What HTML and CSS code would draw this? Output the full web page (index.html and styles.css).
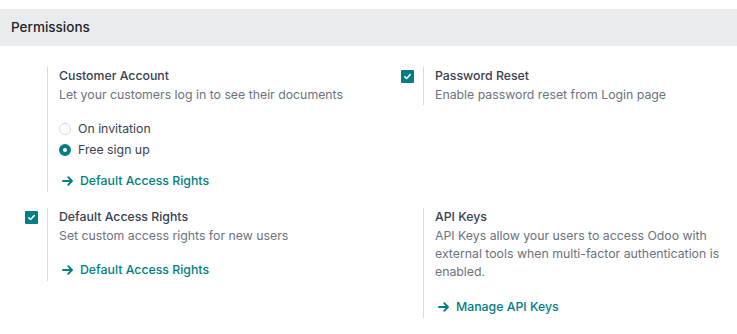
FILE: index.html
```html
<!DOCTYPE html>
<html>
<head>
<meta charset="utf-8">
<link rel="stylesheet" href="styles.css">
</head>
<body>
<div class="page">
  <div class="section-header">Permissions</div>
  <div class="settings">
    <div class="setting">
      <div class="setting-left"></div>
      <div class="setting-right">
        <div class="title">Customer Account</div>
        <div class="desc">Let your customers log in to see their documents</div>
        <div class="radios">
          <label class="radio-row"><span class="radio"></span>On invitation</label>
          <label class="radio-row"><span class="radio checked"></span>Free sign up</label>
        </div>
        <a class="link link-after-radios"><svg class="arrow" viewBox="0 0 12 10" width="12" height="10"><path d="M1 5H10M6.2 1.2L10 5L6.2 8.8" fill="none" stroke="currentColor" stroke-width="1.9" stroke-linecap="round" stroke-linejoin="round"/></svg>Default Access Rights</a>
      </div>
    </div>
    <div class="setting">
      <div class="setting-left"><span class="checkbox"><svg viewBox="0 0 13 13" width="13" height="13"><path d="M3.8 6.8L5.6 8.5L9.2 4.6" fill="none" stroke="#fff" stroke-width="1.6" stroke-linecap="round" stroke-linejoin="round"/></svg></span></div>
      <div class="setting-right">
        <div class="title">Password Reset</div>
        <div class="desc">Enable password reset from Login page</div>
      </div>
    </div>
    <div class="setting">
      <div class="setting-left"><span class="checkbox"><svg viewBox="0 0 13 13" width="13" height="13"><path d="M3.8 6.8L5.6 8.5L9.2 4.6" fill="none" stroke="#fff" stroke-width="1.6" stroke-linecap="round" stroke-linejoin="round"/></svg></span></div>
      <div class="setting-right">
        <div class="title">Default Access Rights</div>
        <div class="desc">Set custom access rights for new users</div>
        <a class="link link-short"><svg class="arrow" viewBox="0 0 12 10" width="12" height="10"><path d="M1 5H10M6.2 1.2L10 5L6.2 8.8" fill="none" stroke="currentColor" stroke-width="1.9" stroke-linecap="round" stroke-linejoin="round"/></svg>Default Access Rights</a>
      </div>
    </div>
    <div class="setting">
      <div class="setting-left"></div>
      <div class="setting-right">
        <div class="title">API Keys</div>
        <div class="desc">API Keys allow your users to access Odoo with external tools when multi-factor authentication is enabled.</div>
        <a class="link"><svg class="arrow" viewBox="0 0 12 10" width="12" height="10"><path d="M1 5H10M6.2 1.2L10 5L6.2 8.8" fill="none" stroke="currentColor" stroke-width="1.9" stroke-linecap="round" stroke-linejoin="round"/></svg>Manage API Keys</a>
      </div>
    </div>
    <div class="setting">
      <div class="setting-left"></div>
      <div class="setting-right stub"></div>
    </div>
  </div>
</div>
</body>
</html>
```

FILE: styles.css
```css
html, body {
  margin: 0;
  padding: 0;
  background: #fff;
  overflow: hidden;
}
body {
  font-family: "Inter", "Noto Sans", sans-serif;
  font-size: 12.3px;
  color: #374151;
}
.page {
  padding-top: 9px;
  height: 334px;
  overflow: hidden;
  box-sizing: border-box;
}
.section-header {
  background: #e9ecef;
  height: 37px;
  line-height: 37px;
  padding-left: 11px;
  font-size: 13.5px;
  font-weight: 500;
  color: #1f2328;
}
.settings {
  display: grid;
  grid-template-columns: 376px 1fr;
  row-gap: 16px;
  padding: 21px 12px 0 11px;
  align-items: start;
}
.setting {
  display: flex;
}
.setting-left {
  width: 36px;
  flex: none;
  padding-left: 14px;
  padding-top: 3px;
  box-sizing: border-box;
}
.setting-right {
  flex: 1;
  border-left: 1px solid #d8dadd;
  padding-left: 11px;
  padding-bottom: 1px;
}
.stub {
  height: 20px;
}
.title {
  line-height: 20px;
  margin-top: -1px;
  font-weight: 500;
  color: #374151;
}
.desc {
  line-height: 18px;
  color: #6b7280;
}
.radios {
  margin-top: 14px;
  display: flex;
  flex-direction: column;
}
.radio-row {
  display: flex;
  align-items: center;
  height: 21px;
  color: #374151;
}
.radio {
  width: 12px;
  height: 12px;
  box-sizing: border-box;
  border: 1px solid #d5d8dc;
  border-radius: 50%;
  margin-right: 7px;
  background: #fff;
}
.radio.checked {
  border: 4px solid #017e84;
  background: #fff;
}
.checkbox {
  display: block;
  width: 13px;
  height: 13px;
  background: #017e84;
  border-radius: 1px;
}
.checkbox svg {
  display: block;
}
.link {
  display: flex;
  align-items: center;
  margin-top: 16px;
  padding-left: 3px;
  line-height: 20px;
  color: #017e84;
  font-weight: 500;
  text-decoration: none;
}
.link-short {
  margin-top: 15px;
}
.link-after-radios {
  margin-top: 11px;
}
.arrow {
  margin-right: 6px;
  flex: none;
}
```
